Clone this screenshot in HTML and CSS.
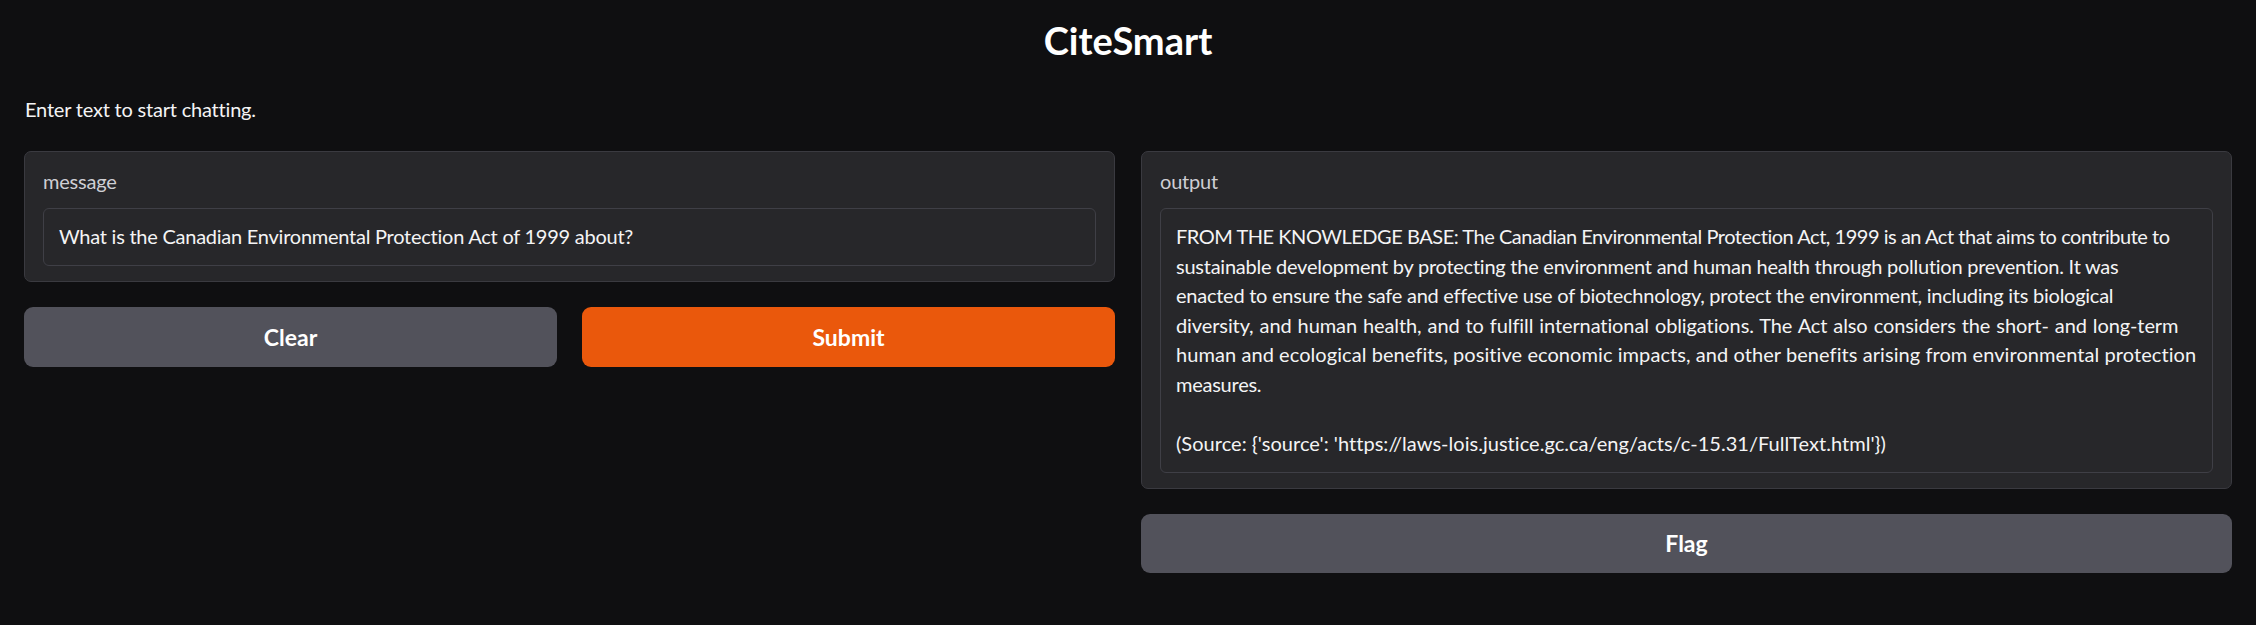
FILE: index.html
```html
<!DOCTYPE html>
<html lang="en">
<head>
<meta charset="utf-8">
<title>CiteSmart</title>
<link rel="stylesheet" href="styles.css">
</head>
<body>
<div class="app">
  <h1 class="title">CiteSmart</h1>
  <p class="desc">Enter text to start chatting.</p>
  <div class="columns">
    <div class="col">
      <div class="block">
        <div class="label">message</div>
        <div class="box"><div class="line">What is the Canadian Environmental Protection Act of 1999 about?</div></div>
      </div>
      <div class="btn-row">
        <button class="btn secondary">Clear</button>
        <button class="btn primary">Submit</button>
      </div>
    </div>
    <div class="col">
      <div class="block">
        <div class="label">output</div>
        <div class="box">
          <div class="line tight">FROM THE KNOWLEDGE BASE: The Canadian Environmental Protection Act, 1999 is an Act that aims to contribute to</div>
          <div class="line">sustainable development by protecting the environment and human health through pollution prevention. It was</div>
          <div class="line">enacted to ensure the safe and effective use of biotechnology, protect the environment, including its biological</div>
          <div class="line wide">diversity, and human health, and to fulfill international obligations. The Act also considers the short- and long-term</div>
          <div class="line looser">human and ecological benefits, positive economic impacts, and other benefits arising from environmental protection</div>
          <div class="line">measures.</div>
          <div class="line">&nbsp;</div>
          <div class="line loose">(Source: {'source': 'https://laws-lois.justice.gc.ca/eng/acts/c-15.31/FullText.html'})</div>
        </div>
      </div>
      <button class="btn secondary">Flag</button>
    </div>
  </div>
</div>
</body>
</html>
```

FILE: styles.css
```css
* { box-sizing: border-box; }
html, body {
  margin: 0;
  padding: 0;
  background: #0f0f11;
}
body {
  font-family: Lato, "Noto Sans", sans-serif;
  color: #f4f4f5;
  font-size: 20px;
  line-height: 29.5px;
}
.app {
  padding: 18px 24px 0;
}
.title {
  margin: 0;
  text-align: center;
  font-size: 38px;
  line-height: 1.2;
  font-weight: 700;
  color: #ffffff;
}
.desc {
  margin: 31px 0 27px 1px;
  letter-spacing: -0.2px;
}
.columns {
  display: grid;
  grid-template-columns: minmax(0, 1fr) minmax(0, 1fr);
  column-gap: 26px;
  align-items: start;
}
.col {
  display: flex;
  flex-direction: column;
  gap: 25px;
  min-width: 0;
}
.block {
  background: #27272a;
  border: 1px solid #3a3a40;
  border-radius: 7px;
  padding: 14.5px 18px 15px;
}
.label {
  color: #cfcfd4;
  margin-bottom: 11.5px;
  letter-spacing: -0.2px;
}
.box {
  border: 1px solid #3f3f46;
  border-radius: 6px;
  background: #27272a;
  padding: 13.5px 15px;
  letter-spacing: -0.25px;
  overflow: hidden;
}
.line {
  white-space: pre;
}
.line.tight { letter-spacing: -0.47px; }
.line.loose { letter-spacing: 0.03px; }
.line.wide { letter-spacing: -0.1px; word-spacing: 1px; }
.line.looser { letter-spacing: 0.07px; }
.btn-row {
  display: grid;
  grid-template-columns: minmax(0, 1fr) minmax(0, 1fr);
  column-gap: 25px;
}
.btn {
  height: 59.5px;
  border: none;
  border-radius: 9px;
  font-family: Lato, "Noto Sans", sans-serif;
  font-weight: 700;
  font-size: 23px;
  color: #ffffff;
  cursor: pointer;
  width: 100%;
}
.secondary { background: #52525b; }
.primary { background: #ea580c; }
```
